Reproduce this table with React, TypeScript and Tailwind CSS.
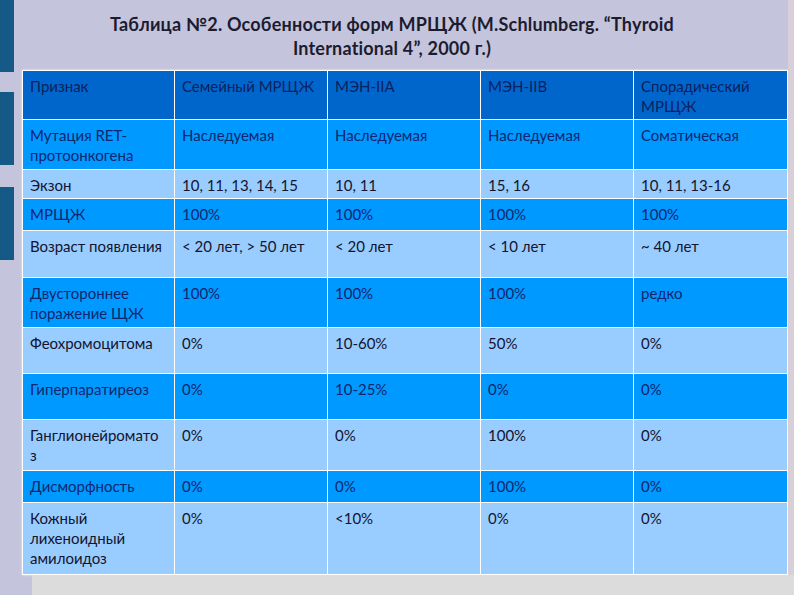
import React from 'react';

type Row = { h: string; tone: 'head' | 'bright' | 'light'; cells: React.ReactNode[] };

const rows: Row[] = [
  { h: 'h-[49px]', tone: 'head', cells: ['Признак', 'Семейный МРЩЖ', 'МЭН-IIA', 'МЭН-IIB', <>Спорадический<br />МРЩЖ</>] },
  { h: 'h-[50px]', tone: 'bright', cells: [<>Мутация RET-<br />протоонкогена</>, 'Наследуемая', 'Наследуемая', 'Наследуемая', 'Соматическая'] },
  { h: 'h-[29px]', tone: 'light', cells: ['Экзон', '10, 11, 13, 14, 15', '10, 11', '15, 16', '10, 11, 13-16'] },
  { h: 'h-[32px]', tone: 'bright', cells: ['МРЩЖ', '100%', '100%', '100%', '100%'] },
  { h: 'h-[47px]', tone: 'light', cells: ['Возраст появления', '< 20 лет, > 50 лет', '< 20 лет', '< 10 лет', '~ 40 лет'] },
  { h: 'h-[50px]', tone: 'bright', cells: [<>Двустороннее<br />поражение ЩЖ</>, '100%', '100%', '100%', 'редко'] },
  { h: 'h-[46px]', tone: 'light', cells: ['Феохромоцитома', '0%', '10-60%', '50%', '0%'] },
  { h: 'h-[46px]', tone: 'bright', cells: ['Гиперпаратиреоз', '0%', '10-25%', '0%', '0%'] },
  { h: 'h-[51px]', tone: 'light', cells: [<>Ганглионейромато<br />з</>, '0%', '0%', '100%', '0%'] },
  { h: 'h-[32px]', tone: 'bright', cells: ['Дисморфность', '0%', '0%', '100%', '0%'] },
  { h: 'h-[72px]', tone: 'light', cells: [<>Кожный<br />лихеноидный<br />амилоидоз</>, '0%', '<10%', '0%', '0%'] },
];

const toneClass = {
  head: 'bg-[#0066cc] text-[#0d1f5c]',
  bright: 'bg-[#0099ff] text-[#10266e]',
  light: 'bg-[#99ccff] text-[#14142e]',
};

const widths = ['w-[152px]', 'w-[153px]', 'w-[153px]', 'w-[153px]', 'w-[154px]'];

export default function App() {
  return (
    <div className="w-[794px] h-[595px] bg-[#c4c4dc] flex overflow-hidden font-['Lato','Liberation_Sans',sans-serif]">
      <div className="w-[22px] shrink-0 flex flex-col">
        <div className="w-[14px] h-[72px] bg-[#155a86]" />
        <div className="w-[14px] h-[73px] mt-[20px] bg-[#155a86]" />
        <div className="w-[14px] h-[73px] mt-[22px] bg-[#155a86]" />
      </div>
      <div className="flex-1 flex flex-col">
        <div className="h-[70px] flex flex-col items-center justify-center pt-[2px] pr-[26px] text-[18px] leading-[24px] font-bold tracking-[0.2px] text-[#1c1c30]">
          <div>Таблица №2. Особенности форм МРЩЖ (M.Schlumberg. “Thyroid</div>
          <div>International 4”, 2000 г.)</div>
        </div>
        <div className="w-[766px] border-t border-l border-white shadow-[0_0_2px_rgba(255,255,255,0.8)]">
          {rows.map((r, i) => (
            <div key={i} className={`flex ${r.h} ${toneClass[r.tone]}`}>
              {r.cells.map((c, j) => (
                <div
                  key={j}
                  className={`${widths[j]} shrink-0 border-r border-b border-white pl-[7px] pt-[5px] text-[15px] leading-[20px]`}
                >
                  {c}
                </div>
              ))}
            </div>
          ))}
        </div>
        <div className="flex-1 ml-[10px] bg-[#dcdcdc]" />
      </div>
      <div className="w-[6px] shrink-0 flex flex-col">
        <div className="h-[575px] bg-[#d8cfd8]" />
        <div className="flex-1 bg-[#dcdcdc]" />
      </div>
    </div>
  );
}
